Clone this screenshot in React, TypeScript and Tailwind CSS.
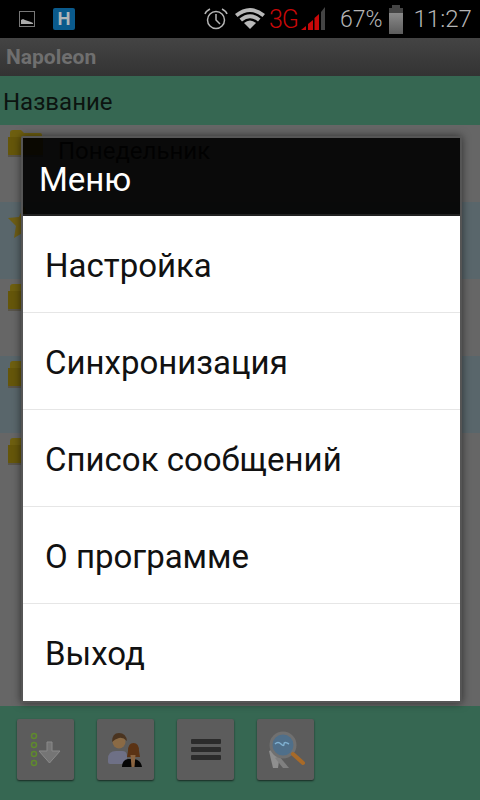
const menuItems = ["Настройка", "Синхронизация", "Список сообщений", "О программе", "Выход"];

const rows = [
  { tone: "bg-[#666666]", icon: "folder", label: "Понедельник" },
  { tone: "bg-[#59666b]", icon: "star", label: "" },
  { tone: "bg-[#666666]", icon: "folder", label: "" },
  { tone: "bg-[#59666b]", icon: "folder", label: "" },
  { tone: "bg-[#666666]", icon: "folder", label: "" },
];

function Folder() {
  return (
    <svg width="38" height="30" viewBox="0 0 38 30" className="blur-[0.6px]">
      <path d="M3 5q0-3 3-3h8l3 3h16q2 0 2 2v2H3z" fill="#6e5f10" />
      <path d="M1 9h35v17q0 3-3 3H4q-3 0-3-3z" fill="#65560a" />
      <rect x="1" y="27" width="35" height="2" fill="#58544a" />
    </svg>
  );
}

function Star() {
  return (
    <svg width="34" height="34" viewBox="0 0 34 34" className="blur-[0.6px]">
      <path d="M17 1l5 11 11 1-8 8 2 12-10-6-10 6 2-12-8-8 11-1z" fill="#6d5d16" />
    </svg>
  );
}

function StatusBar() {
  return (
    <div className="flex h-[38px] items-center bg-black text-[#a9a9a9]">
      <svg width="16" height="16" viewBox="0 0 16 16" className="ml-[19px]">
        <rect x="0.5" y="0.5" width="15" height="15" fill="none" stroke="#777" />
        <path d="M2 13V9l2-1 2 1 3 1 3 1 2 1v1z" fill="#aaa" />
      </svg>
      <div className="ml-[18px] flex h-[22px] w-[22px] items-center justify-center rounded-[2px] bg-[#0a5a8c] font-['Liberation_Sans',sans-serif] text-[18px] leading-none font-bold text-[#b0b5b8]">
        H
      </div>
      <svg width="24" height="22" viewBox="0 0 24 22" fill="none" stroke="#b5b5b5" className="ml-[129px]">
        <circle cx="12" cy="12" r="8.5" strokeWidth="1.5" />
        <path d="M12 6v6l4 4" strokeWidth="1.5" />
        <path d="M1 6q1-3 5-5M23 6q-1-3-5-5" strokeWidth="1.5" />
      </svg>
      <svg width="30" height="22" viewBox="0 0 30 22" className="mb-[3px] ml-[7px]">
        <path d="M0 7Q15-5 30 7l-2.5 3Q15 0 2.500 10z" fill="#b8b8b8" />
        <path d="M4.500 11.500Q15 3 25.500 11.500L23 14.500Q15 8 7 14.500z" fill="#b8b8b8" />
        <path d="M9 16Q15 11 21 16l-6 6z" fill="#b8b8b8" />
      </svg>
      <span className="ml-[4px] w-[30px] text-[25px] leading-none font-light tracking-[-1px] text-[#c80808]">3G</span>
      <svg width="24" height="24" viewBox="0 0 24 24" className="mb-[2px] ml-[2px]">
        <path d="M0 24l5-4v4z" fill="#c80808" />
        <path d="M7 24v-6l5-4v10z" fill="#c80808" />
        <path d="M13.500 24V12L18 8v16z" fill="#c80808" />
        <path d="M20 24V6l4-5v23z" fill="#444" />
      </svg>
      <span className="ml-[15px] text-[23px] leading-none font-light text-[#b5b5b5]">67%</span>
      <div className="ml-[6px] flex h-[29px] w-[14px] flex-col items-center">
        <div className="h-[3px] w-[8px] bg-[#444]" />
        <div className="h-[5px] w-full bg-[#444]" />
        <div className="h-[21px] w-full bg-gradient-to-b from-[#8a8a8a] to-[#5c5c5c]" />
      </div>
      <span className="ml-[11px] text-[24px] leading-none font-light text-[#b5b5b5]">11:27</span>
    </div>
  );
}

function ToolButton({ children }: { children: React.ReactNode }) {
  return (
    <button className="flex h-[61px] w-[57px] items-center justify-center rounded-[2px] bg-[#5c5c5c] shadow-[0_1px_2px_rgba(0,0,0,0.6)]">
      {children}
    </button>
  );
}

export default function App() {
  return (
    <div className="relative flex h-[800px] w-[480px] flex-col overflow-hidden bg-[#666666] font-['Roboto',sans-serif]">
      <StatusBar />

      <div className="flex h-[38px] items-center bg-gradient-to-b from-[#444444] to-[#333333] pt-[2px] pl-[6px] text-[21px] font-bold text-[#6f6f6f]">
        Napoleon
      </div>

      <div className="flex h-[49px] items-center bg-[#366752] pt-[3px] pl-[3px] text-[24px] text-[#0c1410]">Название</div>

      <div className="flex flex-1 flex-col">
        {rows.map((row, i) => (
          <div key={i} className={`flex h-[77px] items-start pt-[3px] pl-[7px] ${row.tone}`}>
            {row.icon === "folder" ? <Folder /> : <Star />}
            {row.label && <span className="ml-[13px] pt-[8px] text-[24px] leading-[30px] text-[#111]">{row.label}</span>}
          </div>
        ))}
        <div className="flex-1 bg-[#666666]" />
      </div>

      <div className="flex h-[94px] items-start gap-[23px] bg-[#366752] pt-[13px] pl-[17px]">
        <ToolButton>
          <svg width="36" height="40" viewBox="0 0 36 40" fill="none" className="blur-[0.4px]">
            <circle cx="6" cy="6" r="2.500" stroke="#5f8a2e" strokeWidth="1.500" />
            <circle cx="6" cy="15" r="2.500" stroke="#5f8a2e" strokeWidth="1.500" />
            <circle cx="6" cy="24" r="2.500" stroke="#5f8a2e" strokeWidth="1.500" />
            <circle cx="6" cy="33" r="2.500" stroke="#5f8a2e" strokeWidth="1.500" />
            <path d="M19 12h5v9h8L21.500 33 11 21h8z" fill="#757575" stroke="#8a8a8a" />
          </svg>
        </ToolButton>
        <ToolButton>
          <svg width="38" height="38" viewBox="0 0 38 38" className="blur-[0.4px]">
            <path d="M1 28q0-8 8-8h6q5 0 5 5v8H3q-2 0-2-2z" fill="#6e7086" />
            <circle cx="12" cy="11" r="6.500" fill="#8a6a45" />
            <path d="M5 11q0-9 7-9t8 8q-4-4-8-3t-7 4z" fill="#4a3420" />
            <path d="M15 36q0-7 6-8h6q7 1 8 8z" fill="#050505" />
            <path d="M21 20q0-8 5.500-8t5.500 8l1 6H20z" fill="#5b3314" />
            <path d="M23.500 24h5l-1 12h-3z" fill="#8a6440" />
          </svg>
        </ToolButton>
        <ToolButton>
          <div className="flex w-[30px] flex-col gap-[3px]">
            <div className="h-[5px] rounded-[1px] bg-[#2b2b2b]" />
            <div className="h-[5px] rounded-[1px] bg-[#2b2b2b]" />
            <div className="h-[5px] rounded-[1px] bg-[#2b2b2b]" />
          </div>
        </ToolButton>
        <ToolButton>
          <svg width="38" height="38" viewBox="0 0 38 38" fill="none" className="blur-[0.4px]">
            <path d="M2 20l7-3 3 13-1 7H6z" fill="#8f8f8f" />
            <path d="M12 25l10 12h-6l-8-10z" fill="#808080" />
            <circle cx="16" cy="14" r="12" fill="#4f6f8a" stroke="#707070" strokeWidth="3" />
            <path d="M8 13q3-3 6 0t3 0 5 0" stroke="#7fb0d0" strokeWidth="1.500" />
            <path d="M26 23l10 9" stroke="#a86a28" strokeWidth="4" strokeLinecap="round" />
          </svg>
        </ToolButton>
      </div>

      <div className="absolute top-[136px] left-[21px] flex w-[441px] flex-col rounded-[2px] border-2 border-[#555555] shadow-[0_0_8px_rgba(0,0,0,0.55)]">
        <div className="flex h-[78px] items-center border-b-2 border-[#222222] bg-black/90 pt-[8px] pl-[16px] text-[33px] text-white">
          Меню
        </div>
        <ul className="bg-white">
          {menuItems.map((item, i) => (
            <li key={item} className={`flex h-[97px] items-center pt-[3px] pl-[22px] text-[33px] text-[#111111] ${i < menuItems.length - 1 ? "border-b border-[#e6e6e6]" : ""}`}>
              {item}
            </li>
          ))}
        </ul>
      </div>
    </div>
  );
}
